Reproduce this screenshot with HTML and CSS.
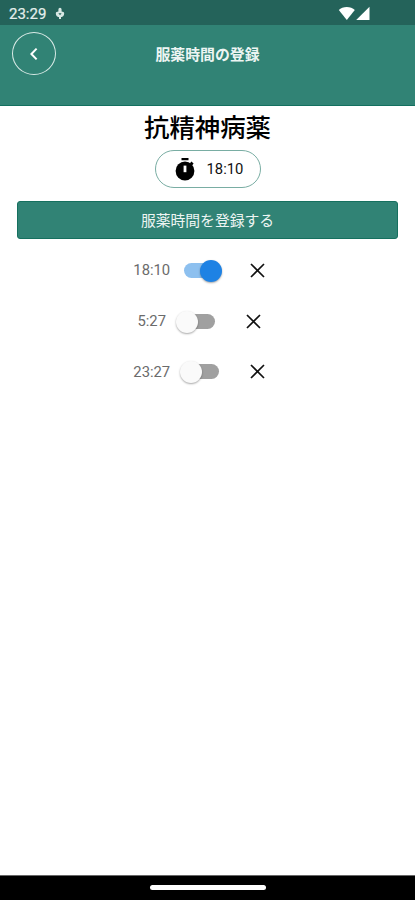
FILE: index.html
```html
<!DOCTYPE html>
<html lang="ja">
<head>
<meta charset="utf-8">
<title>服薬時間の登録</title>
<link rel="stylesheet" href="styles.css">
</head>
<body>
<div class="status">
  <span class="clock">23:29</span>
  <svg class="mic" width="10" height="13" viewBox="0 0 10 13"><path d="M3.400 4.500V2.400a1.600 1.600 0 0 1 3.200 0v2.100C8 4.700 9.200 5.200 9.200 6.200A4.200 4 0 0 1 .8 6.200C.8 5.200 2 4.700 3.400 4.500Z" fill="#d8e8e4"/><path d="M3.400 6.200h3.200L5 8.300Z" fill="#24635a"/><path d="M5 9.500v2.500" stroke="#d8e8e4" stroke-width="2"/></svg>
  <svg class="signal" width="33" height="15" viewBox="0 0 33 15" fill="#fff"><path d="M.8 4C4.500 0 13 0 16.800 4L8.800 14Z"/><path d="M31.500.7v13.300H18.200Z"/></svg>
</div>
<header class="header">
  <button class="back" aria-label="戻る"><svg width="10" height="14" viewBox="0 0 10 14"><path d="M7.600 1.600 2.400 7l5.200 5.400" fill="none" stroke="#fff" stroke-width="2"/></svg></button>
  <h1 class="title">服薬時間の登録</h1>
</header>
<main class="content">
  <h2 class="name">抗精神病薬</h2>
  <button class="time">
    <svg width="20" height="23" viewBox="0 0 20 23"><path d="M6.500 0h7v2.200h-7zM16.400 3.600l2.200 2-1.600 1.800-2.200-2z"/><circle cx="10" cy="13" r="9.400"/><path d="M8.600 7.600h2.800v6.600H8.600z" fill="#fff"/></svg>
    <span>18:10</span>
  </button>
  <button class="submit">服薬時間を登録する</button>
  <div class="row"><span class="label">18:10</span><span class="switch on"></span><svg class="close" width="15" height="15" viewBox="0 0 15 15"><path d="m1 1 13 13M14 1 1 14"/></svg></div>
  <div class="row"><span class="label">5:27</span><span class="switch"></span><svg class="close" width="15" height="15" viewBox="0 0 15 15"><path d="m1 1 13 13M14 1 1 14"/></svg></div>
  <div class="row"><span class="label">23:27</span><span class="switch"></span><svg class="close" width="15" height="15" viewBox="0 0 15 15"><path d="m1 1 13 13M14 1 1 14"/></svg></div>
</main>
<footer class="nav"><div class="handle"></div></footer>
</body>
</html>
```

FILE: styles.css
```css
* { box-sizing: border-box; }
body {
  margin: 0;
  height: 900px;
  display: flex;
  flex-direction: column;
  overflow: hidden;
  background: #fff;
  font-family: Roboto, "Noto Sans CJK JP", sans-serif;
}
button { padding: 0; font-family: inherit; }
svg { display: block; flex: none; }
.status {
  height: 25px;
  flex: none;
  display: flex;
  align-items: center;
  padding: 2px 44px 0 9px;
  background: #24635a;
}
.clock { width: 37px; font-size: 15px; line-height: 20px; color: #e4efec; -webkit-text-stroke: .2px #e4efec; }
.mic { margin-left: 9px; }
.signal { margin-left: auto; }
.header {
  height: 81px;
  flex: none;
  display: grid;
  grid-template-columns: 44px 1fr 44px;
  align-items: start;
  padding: 7px 12px 0;
  background: #318375;
  border-bottom: 1px solid #13705f;
}
.back {
  width: 44px;
  height: 43px;
  display: grid;
  place-items: center;
  border: 1px solid #d9eae6;
  border-radius: 50%;
  background: none;
}
.title {
  margin: 0;
  text-align: center;
  font-size: 14.900px;
  line-height: 46px;
  font-weight: 700;
  color: #edf5f3;
}
.content {
  flex: 1;
  display: flex;
  flex-direction: column;
  align-items: center;
}
.name { margin: 4px 0 0; font-size: 25.400px; line-height: 36px; font-weight: 500; color: #000; }
.time {
  width: 106px;
  height: 38px;
  margin-top: 4px;
  display: flex;
  align-items: center;
  padding: 0 0 0 19px;
  gap: 12px;
  border: 1px solid #79ada3;
  border-radius: 20px;
  background: #fff;
  font-size: 14.800px;
  color: #111;
}
.submit {
  width: 381px;
  height: 38px;
  margin: 13px 0 6px;
  padding-top: 2px;
  border: 1px solid #16705f;
  border-radius: 3px;
  background: #318375;
  font-size: 14.800px;
  line-height: 34px;
  color: #edf5f3;
}
.row {
  height: 50.700px;
  display: flex;
  align-items: center;
  padding-right: 17px;
}
.label { font-size: 14.800px; color: #6b6b6b; }
.switch {
  position: relative;
  width: 35px;
  height: 15px;
  margin: 0 30.500px 0 14px;
  border-radius: 8px;
  background: #a0a0a0;
}
.switch::after {
  content: "";
  position: absolute;
  left: -4px;
  top: -3px;
  width: 22px;
  height: 22px;
  border-radius: 50%;
  background: #fafafa;
  box-shadow: 0 1px 2px rgba(0, 0, 0, .35);
}
.switch.on { background: #8dc0ef; }
.switch.on::after { left: 16px; background: #1e82e4; }
.close { fill: none; stroke: #111; stroke-width: 1.700; }
.nav {
  height: 25px;
  flex: none;
  display: flex;
  justify-content: center;
  padding-top: 9px;
  background: #000;
  border-top: 1px solid #666;
}
.handle { width: 116px; height: 5px; border-radius: 3px; background: #fff; }
```
